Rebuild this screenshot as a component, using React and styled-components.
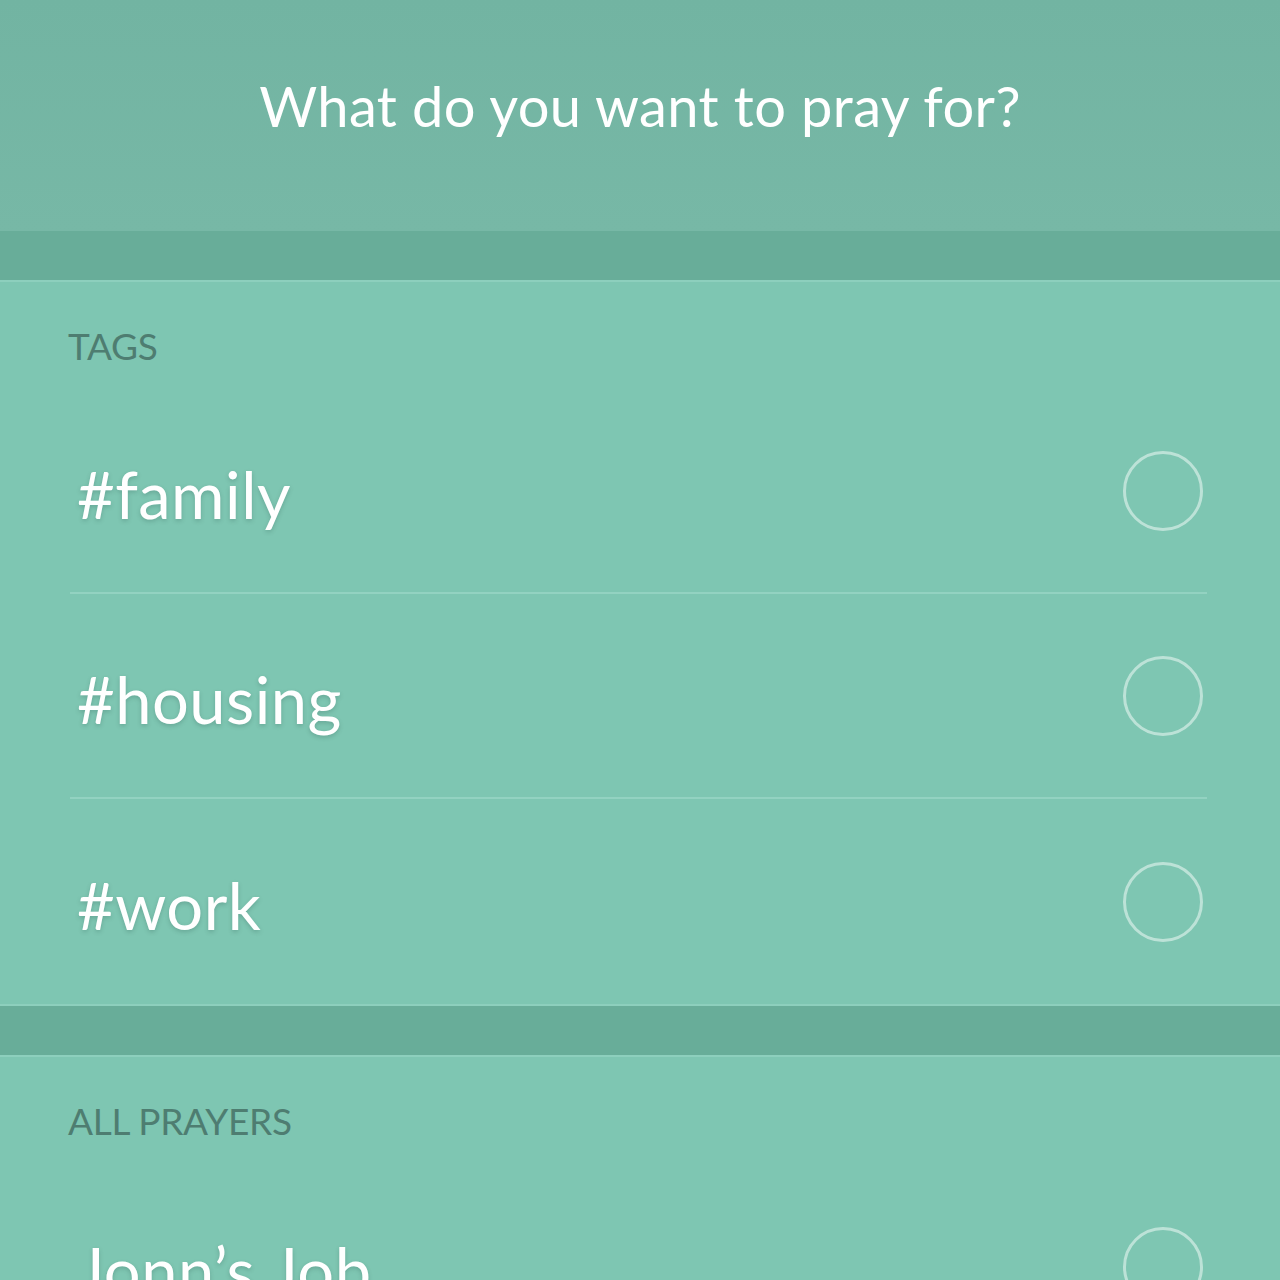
import React from "react";
import styled, { createGlobalStyle } from "styled-components";

const Global = createGlobalStyle`
  html, body { margin: 0; padding: 0; }
  body { background: #7ec6b2; font-family: Lato, "Open Sans", sans-serif; }
  #root { height: 1280px; overflow: hidden; }
`;

const Header = styled.header`
  height: 231px;
  background: linear-gradient(180deg, #72b4a2 0%, #77b8a6 100%);
  display: flex;
  justify-content: center;
  padding-top: 73px;
  box-sizing: border-box;
`;

const Title = styled.h1`
  margin: 0;
  font-family: Lato, sans-serif;
  font-weight: 400;
  font-size: 56px;
  line-height: 66px;
  color: #ffffff;
  letter-spacing: 0.4px;
`;

const Band = styled.div`
  height: 49px;
  background: #68ad99;
`;

const Section = styled.section`
  background: #7ec6b2;
  border-top: 2px solid #8dcfbd;
  border-bottom: ${(p) => (p.$open ? "none" : "2px solid #8dcfbd")};
`;

const Label = styled.div`
  height: 107px;
  box-sizing: border-box;
  padding: 42px 0 0 68px;
  font-family: Lato, sans-serif;
  font-size: 37px;
  line-height: 44px;
  color: #4e7d71;
  letter-spacing: -0.3px;
`;

const List = styled.ul`
  list-style: none;
  margin: 0 73px 0 70px;
  padding: 0;
`;

const Row = styled.li`
  height: 205px;
  box-sizing: border-box;
  display: flex;
  align-items: center;
  justify-content: space-between;
  padding: 0 4px 8px 7px;
  border-bottom: ${(p) => (p.$last ? "none" : "2px solid #93d2c1")};
`;

const RowText = styled.span`
  font-family: Lato, sans-serif;
  font-size: 65px;
  margin-top: 14px;
  color: #ffffff;
  text-shadow: 0 2px 4px rgba(40, 80, 70, 0.25);
  letter-spacing: 0.5px;
`;

const Circle = styled.span`
  width: 80px;
  height: 80px;
  box-sizing: border-box;
  border-radius: 50%;
  border: 3px solid rgba(230, 245, 240, 0.6);
  margin-top: 8px;
  flex: none;
`;

const tags = ["#family", "#housing", "#work"];

export default function App() {
  return (
    <>
      <Global />
      <Header>
        <Title>What do you want to pray for?</Title>
      </Header>
      <Band />
      <Section>
        <Label>TAGS</Label>
        <List>
          {tags.map((t, i) => (
            <Row key={t} $last={i === tags.length - 1}>
              <RowText>{t}</RowText>
              <Circle />
            </Row>
          ))}
        </List>
      </Section>
      <Band />
      <Section $open>
        <Label>ALL PRAYERS</Label>
        <List>
          <Row $last>
            <RowText>Jonn’s Job</RowText>
            <Circle />
          </Row>
        </List>
      </Section>
    </>
  );
}
